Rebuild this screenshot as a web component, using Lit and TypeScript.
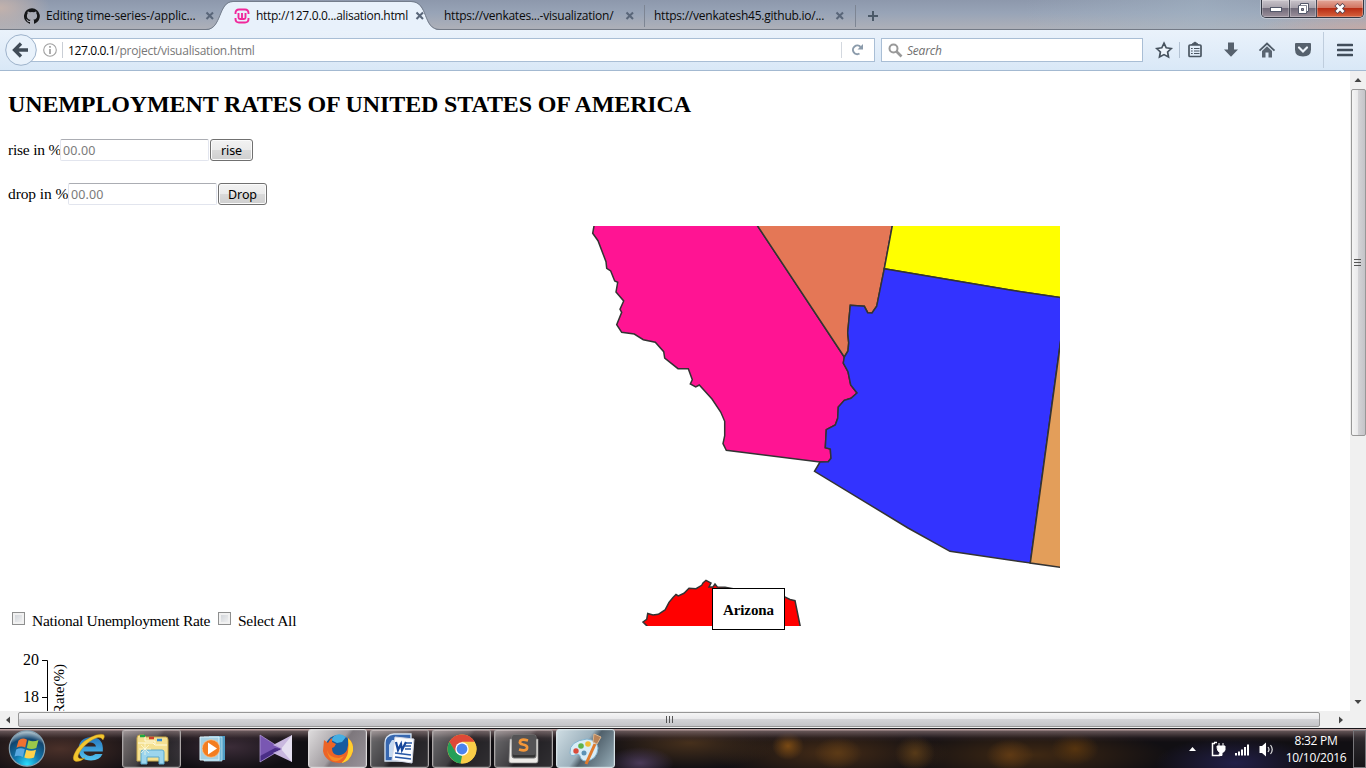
import { LitElement, html, css, svg } from "lit";
import { customElement } from "lit/decorators.js";

const STATES = [
  { fill: "#ff1493", d: "M594,222 L594,226 L592.7,233.3 L598,240.7 L606,261.7 L606.7,268.3 L610.7,271 L614.7,281 L617.7,282.3 L616,292 L623.7,301 L620,309.3 L621.7,312.3 L616.7,324.7 L621.7,332.3 L634.3,334 L643.3,339.7 L655.3,342.3 L663.7,351.7 L664.7,358 L678,368.7 L688.3,368.7 L692.3,379.7 L690.3,384 L695.7,387 L699.3,385 L712,399 L720.7,412 L724.7,421.3 L724.7,435.7 L723,443.7 L726.3,450.3 L820,462 L828.3,461.7 L831,458.3 L830.3,449 L825.3,447.7 L826.3,429.7 L835.3,425 L837.7,418.3 L838.3,407 L844.3,400.3 L851,398.3 L857,393 L850.7,385 L848,371.7 L843.3,363 L844.3,357 L755,222 Z" },
  { fill: "#e47756", d: "M755,222 L844.3,357 L848,351 L848.7,342.7 L847.7,332.7 L850.3,305.3 L864.3,306.3 L867.7,312.7 L872,313 L876.7,306.3 L884.3,268.7 L893,222 Z" },
  { fill: "#ffff00", d: "M893,222 L884.3,268.7 L1010,290 L1064,298.2 L1064,222 Z" },
  { fill: "#3333ff", d: "M884.3,268.7 L1010,290 L1064,298.2 L1064,316 L1030.3,563 L950,551.3 L908,528 L814.5,471.3 L820,462 L828.3,461.7 L831,458.3 L830.3,449 L825.3,447.7 L826.3,429.7 L835.3,425 L837.7,418.3 L838.3,407 L844.3,400.3 L851,398.3 L857,393 L850.7,385 L848,371.7 L843.3,363 L844.3,357 L848,351 L848.7,342.7 L847.7,332.7 L850.3,305.3 L864.3,306.3 L867.7,312.7 L872,313 L876.7,306.3 Z" },
  { fill: "#e39e5a", d: "M1064,317 L1030.3,563 L1064,567.8 Z" },
  { fill: "#ff0000", d: "M650,630 L647,626 L643,622 L646.7,619.3 L647.7,613.5 L653,615 L658.3,614.3 L665,610 L669,602.3 L673,597.5 L676,594.5 L678.3,596 L684,593.3 L689,588.3 L696,588.7 L701.7,585.3 L703,583 L706,580.3 L711,583 L709,587 L713,587 L715,584 L717.3,587 L725,587.3 L740,590 L770,594 L784.3,596.7 L790,599.5 L795,600.7 L801,630 Z" },
];

@customElement("tab-bar")
class TabBar extends LitElement {
  static styles = css`
    :host { display: flex; height: 30px; box-sizing: border-box; position: relative;
      font: 12px/16px "Open Sans", "Noto Sans", sans-serif; color: #0a0a0a;
      background: radial-gradient(ellipse 50px 26px at 0 8px, #c3b2ac 0, transparent 100%),
        radial-gradient(ellipse 110px 18px at 1366px 30px, #c3a9a6 0, transparent 100%),
        linear-gradient(90deg, transparent 75%, #a6b8c880 88%, transparent),
        linear-gradient(#8d98ac, #98a4b7 45%, #acafb8 95%);
      border-bottom: 1px solid #737a86; }
    .tab { display: flex; align-items: center; height: 31px; box-sizing: border-box; padding-top: 1px; }
    .label { white-space: nowrap; flex: none; }
    .x { margin-left: auto; flex: none; }
    .first { width: 216px; padding-left: 24px; padding-right: 1px; }
    .first .label { padding-left: 6px; letter-spacing: -.15px; }
    .active { width: 226px; padding: 1px 17px 0 18px; position: relative; }
    .active .label { padding-left: 6px; letter-spacing: -.3px; }
    .shape { position: absolute; left: -10px; top: 0; z-index: 0; }
    .active > :not(.shape) { position: relative; z-index: 1; }
    .third { width: 202px; padding-left: 2px; }
    .third .label, .fourth .label { letter-spacing: -.24px; }
    .third .x { width: 19px; }
    .fourth { width: 210px; padding-right: 10px; padding-left: 9px; }
    .sep { width: 1px; height: 22px; margin-top: 5px; background: #7d8593; }
    .plus { margin: 11px 0 0 12px; }
    .win { margin-left: auto; margin-right: 2px; display: flex; height: 17px; border: 1px solid #343844; border-top: 0;
      border-radius: 0 0 5px 5px; overflow: hidden; box-shadow: 0 0 0 1px #d6d9df99; }
    .b { width: 27px; display: flex; align-items: center; justify-content: center; background: linear-gradient(#c9c4cb, #a8a2ac 45%, #716b7a 50%, #9b8f9a); border-right: 1px solid #474a56; box-shadow: inset 0 0 0 1px #ffffff44; }
    .min { align-items: flex-end; padding-bottom: 4px; box-sizing: border-box; width: 28px; }
    .mid { width: 26px; }
    .close { width: 46px; border: 0; background: linear-gradient(#e3a799, #d27561 45%, #b92d14 50%, #d6633e); }
  `;
  x() { return svg`<path d="M1.500 1.500l6.500 6.500M8 1.500L1.500 8" stroke="#596679" stroke-width="2.100"/>`; }
  render() {
    const cross = html`<svg class="x" width="10" height="10">${this.x()}</svg>`;
    return html`
      <div class="tab first">
        <svg width="16" height="16" viewBox="0 0 16 16"><path fill="#161719" d="M8 .2a8 8 0 0 0-2.500 15.600c.4.1.5-.2.5-.4v-1.500c-2.200.5-2.700-.9-2.700-.9-.4-.9-.9-1.200-.9-1.200-.7-.5.1-.5.1-.5.8.1 1.200.8 1.200.8.7 1.200 1.900.9 2.300.7.1-.5.3-.9.5-1.100-1.800-.2-3.600-.9-3.600-4 0-.9.3-1.600.8-2.100-.1-.2-.4-1 .1-2.100 0 0 .7-.2 2.200.8a7.500 7.500 0 0 1 4 0c1.500-1 2.200-.8 2.200-.8.4 1.100.2 1.900.1 2.100.5.6.8 1.300.8 2.100 0 3.100-1.900 3.700-3.700 3.900.3.3.6.8.6 1.500v2.200c0 .2.1.5.600.4A8 8 0 0 0 8 .2z"/></svg>
        <span class="label">Editing time-series-/applic...</span>${cross}
      </div>
      <div class="tab active">
        <svg class="shape" width="240" height="31"><path d="M0 30C16 30 12 2 27 2H205C223 2 216 30 234 30V31H0Z" fill="#e8f1fb"/><path d="M0 29.500C16 29.500 12 1.500 27 1.500H205C223 1.500 216 29.500 234 29.500" fill="none" stroke="#737d8c"/></svg>
        <svg width="16" height="16" viewBox="0 0 16 16" fill="none" stroke="#f0289b" stroke-width="1.900"><path d="M1.500 6V5Q1.500 1.500 5 1.500H11Q14.500 1.500 14.500 5V6M1.500 10v1Q1.500 14.500 5 14.500H11Q14.500 14.500 14.500 11V10"/><path d="M4.500 5V9.500Q4.500 11 6 11H10Q11.500 11 11.500 9.500V5M8 5v6"/></svg>
        <span class="label">http://127.0.0...alisation.html</span>${cross}
      </div>
      <div class="tab third"><span class="label">https://venkates...-visualization/</span><svg class="x" width="19" height="10">${this.x()}</svg></div>
      <div class="sep"></div>
      <div class="tab fourth"><span class="label">https://venkatesh45.github.io/...</span>${cross}</div>
      <div class="sep"></div>
      <svg class="plus" width="10" height="10"><path d="M5 0v10M0 5h10" stroke="#4b5968" stroke-width="2"/></svg>
      <div class="win">
        <div class="b min"><svg width="12" height="6"><rect x=".5" y=".5" width="11" height="4" fill="#fff" stroke="#53586a"/></svg></div>
        <div class="b mid"><svg width="13" height="13"><path d="M3.500 1.500h8v8h-2v2h-8v-8h2z" fill="#fff" stroke="#53586a"/><path d="M4.500 6.500h2v2h-2z" fill="#998f9c" stroke="#53586a"/><path d="M4 3.500h5.500v5.500" fill="none" stroke="#53586a" stroke-width=".7"/></svg></div>
        <div class="b close"><svg width="12" height="11"><path d="M2 1.500l8 8M10 1.500l-8 8" stroke="#594651" stroke-width="4.500"/><path d="M2.500 2l7 7M9.500 2l-7 7" stroke="#fff" stroke-width="2.700"/></svg></div>
      </div>`;
  }
}

@customElement("nav-bar")
class NavBar extends LitElement {
  static styles = css`
    :host { display: flex; align-items: center; height: 41px; box-sizing: border-box; padding: 0 13px 0 5px;
      border-bottom: 1px solid #a3b9d1; background: linear-gradient(#eaf2fb, #d9e8f7);
      font: 12px/22px "Open Sans", "Noto Sans", sans-serif; }
    .back { flex: none; z-index: 1; }
    .url { width: 850px; margin-left: -12px; padding-left: 16px; }
    .box { height: 24px; box-sizing: border-box; background: #fff; border: 1px solid #a9bed5; display: flex; align-items: center; }
    .host { color: #000; letter-spacing: -.37px; padding-top: 2px; }
    .path { color: #777; letter-spacing: -.25px; padding-top: 2px; }
    .div { width: 1px; height: 16px; background: #c9ced5; margin: 0 5px 0 4px; }
    .reload { margin-left: auto; border-left: 1px solid #d3d8df; padding: 2px 10px 2px 9px; height: 12px; }
    .reload svg { display: block; }
    .search { width: 262px; margin-left: 6px; padding-left: 6px; color: #707070; font-style: italic; gap: 4px; }
    .search span { padding-top: 2px; letter-spacing: -.2px; }
    .icons { display: flex; align-items: center; flex: 1; }
    .icons svg { flex: none; }
    .sep { width: 1px; height: 16px; background: #b3c2d3; }
    .tall { height: 36px; background: #bfcddd; }
    .menu { margin-left: auto; }
  `;
  render() {
    return html`
      <svg class="back" width="32" height="32"><circle cx="16" cy="16" r="15.300" fill="#e9f2fb" stroke="#9db2ca"/><path d="M16 9.500l-6.500 6.500 6.500 6.500M10 16h13" fill="none" stroke="#414c58" stroke-width="3.300"/></svg>
      <div class="box url">
        <svg width="16" height="16" fill="none" stroke="#a0a0a0"><circle cx="8" cy="8" r="6.300" stroke-width="1.100"/><path d="M8 7v5M8 4v1.700" stroke-width="1.700"/></svg>
        <span class="div"></span><span class="host">127.0.0.1</span><span class="path">/project/visualisation.html</span>
        <span class="reload"><svg width="13" height="12"><path d="M8.500 9.500A4.300 4.300 0 1 1 9.500 3" fill="none" stroke="#8b9bab" stroke-width="2"/><path d="M12 0v5.500H6.500z" fill="#8b9bab"/></svg></span>
      </div>
      <div class="box search"><svg width="15" height="15" fill="none" stroke="#999"><circle cx="5.500" cy="5.500" r="4" stroke-width="2"/><path d="M8.500 8.500l5 5" stroke-width="2.700"/></svg><span>Search</span></div>
      <div class="icons">
        <svg width="36" height="18"><path d="M21 2.200l2.200 4.600 5 .7-3.600 3.500.9 5-4.500-2.400-4.500 2.400.9-5-3.600-3.500 5-.7z" fill="#eef5fc" stroke="#46525e" stroke-width="1.700"/></svg>
        <span class="sep"></span>
        <svg width="30" height="18" fill="none" stroke="#4a5662"><rect x="9" y="4" width="12" height="11.500" rx="1" stroke-width="1.700"/><path d="M11.500 3.500l3.500-2.500 3.500 2.500z" fill="#4a5662" stroke-width="1"/><path d="M11 7.500h1.700M14 7.500h5.500M11 10h1.700M14 10h5.500M11 12.500h1.700M14 12.500h5.500" stroke-width="1.200"/></svg>
        <svg width="42" height="18"><path d="M18 1.500h6v7h4L21 15.800l-7-7.300h4z" fill="#56616d"/></svg>
        <svg width="30" height="18"><path d="M7.500 9.700L15 2.500l7.500 7.200" fill="none" stroke="#4f5b67" stroke-width="1.800"/><path d="M10 10l5-4.700 5 4.700v6.500h-3.500v-5h-3v5H10z" fill="#5a6571"/></svg>
        <svg width="41" height="18"><path d="M13 3q0-1 1-1h14q1 0 1 1v5.500q0 7-8 7t-8-7z" fill="#56616d"/><path d="M17 6.500l4 4 4-4" fill="none" stroke="#edf4fb" stroke-width="2.200" stroke-linecap="round"/></svg>
        <span class="sep tall"></span>
        <svg class="menu" width="16" height="14"><path d="M1 2h14M1 7h14M1 12h14" stroke="#424e5b" stroke-width="2.600" stroke-linecap="round"/></svg>
      </div>`;
  }
}

@customElement("rates-page")
class RatesPage extends LitElement {
  static styles = css`
    :host { display: block; width: 1350px; height: 640px; overflow: hidden; background: #fff; color: #000;
      font: 16px/18px "Liberation Serif", serif; }
    h2 { font-size: 24px; line-height: 28px; margin: 0; padding: 19px 0 0 8px; white-space: nowrap; letter-spacing: -.12px; }
    .row { display: flex; align-items: center; height: 24px; padding-left: 8px; font-size: 15.500px; letter-spacing: -.22px; white-space: nowrap; }
    .rise { margin-top: 20px; }
    .drop { margin-top: 20px; }
    .lab { width: 52px; }
    .drop .lab { width: 60px; letter-spacing: -.1px; }
    input[type="text"], .btn { height: 22px; box-sizing: border-box; font: 12.500px "Noto Sans", sans-serif; }
    input[type="text"] { width: 149px; border: 1px solid #e2e5ee; border-top-color: #abadb3; border-radius: 2px; padding: 1px 2px; outline: 0; background: #fff; letter-spacing: .1px; }
    input::placeholder { color: #7b7b7b; opacity: 1; }
    .btn { margin-left: 1px; width: 43px; padding: 0; border: 1px solid #707070; border-radius: 3px; box-shadow: inset 0 0 0 1px #fbfbfb;
      background: linear-gradient(#f2f2f2, #ebebeb 48%, #dadada 50%, #cfcfcf); color: #000; letter-spacing: -.1px; }
    .drop .btn { width: 49px; }
    .stage { display: flex; align-items: flex-end; height: 400px; margin-top: 20px; }
    .checks { width: 580px; height: 13px; display: flex; align-items: center; padding-left: 12px; box-sizing: border-box; white-space: nowrap; font-size: 15.500px; letter-spacing: -.25px; }
    .box { width: 13px; height: 13px; box-sizing: border-box; border: 1px solid #8e8f8f; background: linear-gradient(135deg, #cbcfd5, #f6f6f6); box-shadow: inset 0 0 0 2px #f1f1f1; margin: 0 7px 0 0; position: relative; top: -1px; }
    .checks span:not(.box) { padding-top: 3px; }
    .c1 { width: 178px; margin-right: 8px; letter-spacing: -.3px; }
    .map { position: relative; width: 480px; height: 400px; }
    .map svg { display: block; }
    .tip { position: absolute; left: 132px; top: 362px; width: 73px; height: 42px; box-sizing: border-box; border: 1px solid #000; background: #fff;
      font-size: 15px; font-weight: bold; text-align: center; line-height: 43px; letter-spacing: -.1px; }
    .chart { display: block; margin-top: 24px; }
  `;
  render() {
    return html`
      <h2>UNEMPLOYMENT RATES OF UNITED STATES OF AMERICA</h2>
      <div class="row rise"><span class="lab">rise in %</span><input type="text" placeholder="00.00"><button class="btn">rise</button></div>
      <div class="row drop"><span class="lab">drop in %</span><input type="text" placeholder="00.00"><button class="btn">Drop</button></div>
      <div class="stage">
        <div class="checks"><span class="box"></span><span class="c1">National Unemployment Rate</span><span class="box"></span><span>Select All</span></div>
        <div class="map">
          <svg width="480" height="400" viewBox="580 226 480 400">
            ${STATES.map((s) => svg`<path d=${s.d} fill=${s.fill} stroke="#333" stroke-width="1.500"/>`)}
          </svg>
          <div class="tip">Arizona</div>
        </div>
      </div>
      <svg class="chart" width="200" height="80" viewBox="0 650 200 80" font-family="Liberation Serif, serif" font-size="16">
        <text x="39" y="665" text-anchor="end">20</text><text x="39" y="702" text-anchor="end">18</text>
        <path d="M42 660.500H47.500V730M42 697.500h5" fill="none" stroke="#000"/>
        <text transform="translate(64 664) rotate(-90)" text-anchor="end" font-size="15">Rate(%)</text>
      </svg>`;
  }
}

@customElement("task-bar")
class TaskBar extends LitElement {
  static styles = css`
    :host { display: flex; height: 40px; box-sizing: border-box; border-top: 1px solid #17151a; padding-left: 8px; color: #fff;
      font: 12px/17px "Open Sans", "Noto Sans", sans-serif;
      background:
        linear-gradient(#b59b9b 0, #b59b9b 1px, #8b7678aa 2px, #6b585a99 5px, #3b2c3055 9px, transparent 13px),
        radial-gradient(ellipse 34px 16px at 640px 34px, #4a3a58, transparent),
        radial-gradient(ellipse 16px 14px at 788px 17px, #7a4a14, transparent),
        radial-gradient(ellipse 24px 16px at 838px 24px, #5c3a16, transparent),
        radial-gradient(ellipse 20px 18px at 915px 24px, #573a18, transparent),
        radial-gradient(ellipse 24px 16px at 1010px 26px, #5f3a14, transparent),
        radial-gradient(ellipse 24px 16px at 1075px 20px, #56340f, transparent),
        radial-gradient(ellipse 90px 26px at 690px 14px, #46301c, transparent),
        radial-gradient(ellipse 120px 28px at 830px 24px, #442b16, transparent),
        radial-gradient(ellipse 140px 28px at 1030px 26px, #402913, transparent),
        radial-gradient(ellipse 80px 26px at 1235px 34px, #221f48, transparent),
        radial-gradient(ellipse 90px 30px at 60px 20px, #4a3029, transparent),
        radial-gradient(ellipse 70px 24px at 230px 18px, #3b2c38, transparent),
        #110f13; }
    .start { width: 114px; flex: none; }
    .app { width: 59px; height: 39px; box-sizing: border-box; margin-right: 3px; display: flex; align-items: center; justify-content: center; }
    .open { border: 1px solid #aaa5a5; border-radius: 3px; background: linear-gradient(125deg, #ffffff66 0, #ffffff33 45%, #ffffff11 52%, #ffffff22); box-shadow: inset 0 0 0 1px #ffffff22; }
    .ff { background: linear-gradient(125deg, #dedcdd, #a29da1 48%, #7d777c 54%, #99939a); border-color: #dcd9da; }
    .paint { background: linear-gradient(125deg, #cfdde3, #9cb1bd 45%, #50606b 55%, #96adb8); border-color: #d6e2e6; }
    .tray { margin-left: auto; display: flex; align-items: center; }
    .clock { width: 72px; text-align: center; margin-left: 4px; letter-spacing: -.3px; }
    .show { width: 13px; height: 38px; box-sizing: border-box; border: 1px solid #77767a; margin-left: 1px; background: linear-gradient(#65606466, #18171aaa); }
  `;
  render() {
    return html`
      <div class="start"><svg width="114" height="39">
        <defs><radialGradient id="orb" cx=".5" cy=".95" r=".9"><stop offset="0" stop-color="#2be0ff"/><stop offset=".4" stop-color="#1177ae"/><stop offset=".8" stop-color="#12456e"/><stop offset="1" stop-color="#a3b9c6"/></radialGradient>
        <linearGradient id="ie" x2="0" y2="1"><stop stop-color="#2475bd"/><stop offset="1" stop-color="#54c5f1"/></linearGradient></defs>
        <circle cx="19" cy="19.500" r="17.700" fill="url(#orb)" stroke="#85a1b2" stroke-width="1.200"/>
        <path d="M10.500 11.500Q14.500 8 19 10.800L17.200 18.500Q13 16.500 8.500 18.700Z" fill="#ef7131"/><path d="M20.500 11.300Q25 13.500 30.500 11L28.300 19Q23.500 21 18.800 19Z" fill="#9ac84a"/><path d="M8.200 20.500Q12.500 18.200 16.800 20.200L14.800 28Q10.500 26 6.500 27.500Z" fill="#58a8e1"/><path d="M18.300 20.700Q23 22.800 28 20.700L26 28.500Q21 30.500 16.300 28.500Z" fill="#fdd24c"/>
        <path d="M75.500 22.500H94.800Q96 8 82.500 8Q71 9 70.500 20Q71 31.500 83 31.500Q92 31 94.500 25H87.500Q82 29 77 25Q75.800 24 75.500 22.500M76 17.500Q78 13.500 82 13.500Q87 13.500 88 17.500Z" fill="url(#ie)" fill-rule="evenodd"/>
        <path d="M95 11Q100 3 88 6Q76 10 69 20Q62 31 68 32.500Q72 33 77 29Q70 31 70 27Q72 20 81 13Q92 5 95 11" fill="#f3c62f" stroke="#b98716" stroke-width=".4"/>
      </svg></div>
      <div class="app open"><svg width="34" height="32">
        <path d="M2 5q0-3 3-3h4l2 2h20q2 0 2 3v21H2z" fill="#f4e091" stroke="#c8a94b"/><path d="M5 3h5" stroke="#1eaa42" stroke-width="2.500"/><path d="M14 5h5" stroke="#cf3f2b" stroke-width="2.500"/><path d="M22 7h5" stroke="#3189d8" stroke-width="2.500"/><path d="M3 10h15l2 2h12M10 4v4h10v3" stroke="#fffbe0" fill="none"/>
        <path d="M6 31V19q0-2 2-2h19q2 0 2 2v12h-5v-7H12v7z" fill="#9cd5ed" stroke="#5ba8cb"/><path d="M10 10v12M4 16h12M6 12l8 8M14 12l-8 8" stroke="#fffde4" stroke-width=".7"/>
      </svg></div>
      <div class="app"><svg width="30" height="28"><path d="M10 1h16v24H10z" fill="#4e9cc4"/><path d="M5 2h18v24H5z" fill="#71b7d7" stroke="#c8e9f5" stroke-width=".7"/><path d="M1 2h19v23H1z" fill="#a3cfe2" stroke="#ddf2fa"/><circle cx="12" cy="13.500" r="8.800" fill="#f37d20" stroke="#ffc38a" stroke-width=".7"/><path d="M9 7.500l9 6-9 6z" fill="#fff"/></svg></div>
      <div class="app"><svg width="34" height="30"><path d="M1 1l22 14L1 28z" fill="#7957b2"/><path d="M1 22l15-8 7 1L1 28z" fill="#4a2e87"/><path d="M33 1L14 11l9 4-9 4 19 9z" fill="#c9b8df"/><path d="M33 1L22 15l11 13z" fill="#e5dff0"/><path d="M1 1l22 14L1 28z" fill="none" stroke="#b6a1da" stroke-width=".7"/></svg></div>
      <div class="app open ff"><svg width="32" height="32"><circle cx="16.500" cy="15.500" r="13.500" fill="#175b9f"/><path d="M12 3q6-4 12 1l-4 5-5 1-6-3z" fill="#45aee2"/><path d="M26 5q6 5 5 13-3 12-14 12Q3 29 1 18L2 7l4 3q2-4 4-5v4l4 2q-1 3-4 4 0 6 5 7 7 1 10-5 2-6 1-12" fill="#ec6426"/><path d="M26 5q6 5 5 13-3 11-12 12 6-4 7-11 1-7 0-14" fill="#ffcf2e"/><path d="M5 17q2 8 12 8l5-2q-4 6-10 5-6-2-7-11" fill="#f58b25"/></svg></div>
      <div class="app open"><svg width="34" height="32"><path d="M4 4q3-3 7-3h17v27H2V10q0-4 2-6" fill="#3767b0" stroke="#d8e5f5" stroke-width="1.300"/><path d="M9 7h5v17H6V12z" fill="#c5d9f1"/><path d="M12 4l19 2-2 24-20-3z" fill="#fbfcff" stroke="#d3d7e5"/><path d="M13 9l2 8 3-6 1 6 4-8" fill="none" stroke="#17479b" stroke-width="2.200"/><path d="M23 10h6M22 13h6M22 16h6M12 20l16 2M12 24l16 2" stroke="#2757a5" stroke-width="1.700"/></svg></div>
      <div class="app open"><svg width="30" height="30"><circle cx="15" cy="15" r="14.500" fill="#f7cc47"/><path d="M2.400 7.800A14.500 14.500 0 0 1 27.600 7.800H15L8.500 18.500Z" fill="#df4937"/><path d="M2.400 7.800L9 18.500l6 3.500-1.500 7.400A14.500 14.500 0 0 1 2.400 7.800" fill="#259f58"/><path d="M15 8h12.600A14.500 14.500 0 0 1 14 29.500L21.500 18z" fill="#f9cd48"/><circle cx="15" cy="15" r="6.700" fill="#fff"/><circle cx="15" cy="15" r="5.400" fill="#4b83ed"/></svg></div>
      <div class="app open"><svg width="32" height="30"><path d="M2 5h28v22q0 2-2 2H3q-2 0-2-2z" fill="#edeae7" stroke="#888" stroke-width=".7"/><rect x="4" y="1" width="24" height="23" rx="2" fill="#353535" stroke="#777"/><rect x="4.500" y="1" width="23" height="20" rx="2" fill="#555456"/><path d="M20 6.500q-7-2-8 1-1 2 3 3 5 1 4 4-1 3-8 1" fill="none" stroke="#f49739" stroke-width="2.700"/></svg></div>
      <div class="app open paint"><svg width="34" height="32"><path d="M18 6Q28 7 29 15 28 27 17 28q-5 0-6-5-1-3-5-1-4 2-5-2Q0 8 18 6" fill="#d8edf7" stroke="#82b4d0"/><circle cx="7" cy="18" r="2.700" fill="#d94c3b"/><circle cx="12" cy="13" r="2.800" fill="#5fb24a"/><circle cx="19" cy="11" r="2.800" fill="#f1bd35"/><circle cx="15" cy="20" r="2.500" fill="#5c92b5"/><path d="M26 11l-9 20" stroke="#df7b2e" stroke-width="3"/><path d="M25 1l7 3-4 7-4-2z" fill="#b98357" stroke="#dbb48d"/></svg></div>
      <div class="tray">
        <svg width="92" height="20"><path d="M5 12l3.500-4 3.500 4z" fill="#fff"/><g transform="translate(2.500 0)"><path d="M28.500 4.500H26v12h7v-2M27.500 3.500h3" fill="none" stroke="#fff" stroke-width="1.500"/><path d="M30.500 7h8v4q-1 2.500-3 2.500v3h-2v-3q-3-1-3-6.500M32.500 4v3M36.500 4v3" fill="#fff" stroke="#fff" stroke-width="1"/><path d="M49.500 14v2.500M52.500 12.500v4M55.500 10.500v6M58.500 8v8.500M61.500 5.500v11" stroke="#fff" stroke-width="2"/><path d="M73 7h2.500l4-3.500v14L75.500 14H73z" fill="#fff"/><path d="M81.500 8q2 2.500 0 5M84 6q3.500 4.500 0 9" fill="none" stroke="#ddd" stroke-width="1.200"/></g></svg>
        <div class="clock">8:32 PM<br>10/10/2016</div>
        <div class="show"></div>
      </div>`;
  }
}

@customElement("app-root")
class AppRoot extends LitElement {
  static styles = css`
    :host { display: flex; flex-direction: column; width: 1366px; height: 768px; overflow: hidden; background: #fff; }
    .mid { display: flex; height: 640px; }
    .v { width: 16px; box-sizing: border-box; background: #f0f0f0; display: flex; flex-direction: column; align-items: center; }
    .v svg { flex: none; }
    .v .thumb { width: 15px; height: 347px; box-sizing: border-box; border: 1px solid #979797; border-radius: 2px; background: linear-gradient(90deg, #f5f5f5, #e9e9eb 45%, #d3d3d6 50%, #c4c4c8); display: flex; align-items: center; justify-content: center; }
    .v .down { margin-top: auto; }
    .h { height: 17px; display: flex; align-items: center; background: #f0f0f0; }
    .h .thumb { width: 1302px; height: 15px; box-sizing: border-box; border: 1px solid #979797; border-radius: 2px; background: linear-gradient(#f5f5f5, #e9e9eb 45%, #d3d3d6 50%, #c4c4c8); display: flex; align-items: center; justify-content: center; }
  `;
  render() {
    return html`
      <tab-bar></tab-bar><nav-bar></nav-bar>
      <div class="mid"><rates-page></rates-page>
        <div class="v"><svg width="16" height="18"><path d="M4.500 11l3.500-4 3.500 4z" fill="#444"/></svg>
          <div class="thumb"><svg width="8" height="10"><path d="M0 1.500h7M0 4.500h7M0 7.500h7" stroke="#555"/></svg></div>
          <svg class="down" width="16" height="18"><path d="M4.500 7l3.500 4 3.500-4z" fill="#444"/></svg></div>
      </div>
      <div class="h"><svg width="18" height="16"><path d="M10 4.500L6 8l4 3.500z" fill="#444"/></svg>
        <div class="thumb"><svg width="9" height="8"><path d="M1.500 0v7M4.500 0v7M7.500 0v7" stroke="#555"/></svg></div>
        <svg width="46" height="16"><path d="M19 4.500L23 8l-4 3.500z" fill="#444"/></svg></div>
      <task-bar></task-bar>`;
  }
}
